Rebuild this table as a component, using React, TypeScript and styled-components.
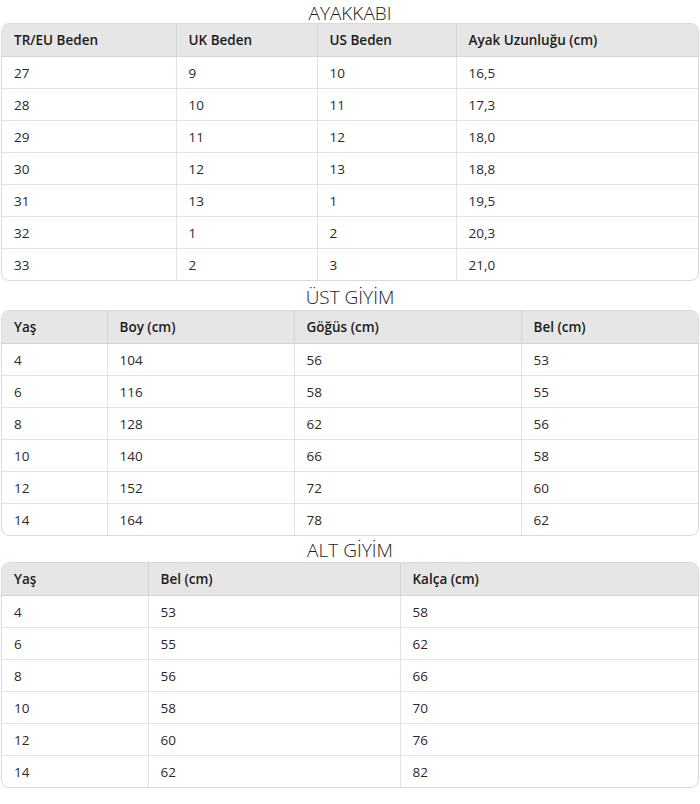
import React from "react";
import styled, { createGlobalStyle } from "styled-components";

const Global = createGlobalStyle`
  html, body { margin: 0; padding: 0; background: #fff; }
  body { font-family: "Open Sans", "Noto Sans", sans-serif; color: #1f1f1f; }
`;

const Page = styled.div`
  display: flex;
  flex-direction: column;
  width: 700px;
  padding: 0 1px;
  box-sizing: border-box;
`;

const Title = styled.div<{ $h: number; $pt: number }>`
  height: ${(p) => p.$h}px;
  padding-top: ${(p) => p.$pt}px;
  box-sizing: border-box;
  text-align: center;
  font-size: 19px;
  font-weight: 300;
  line-height: 20px;
  color: #1a1a1a;
`;

const Frame = styled.div`
  border: 1px solid #dadada;
  border-radius: 8px;
  overflow: hidden;
`;

const Table = styled.table`
  width: 100%;
  border-collapse: collapse;
  table-layout: fixed;
  font-size: 13.5px;
`;

const Th = styled.th<{ $last?: boolean }>`
  background: #e6e6e6;
  font-weight: 600;
  text-align: left;
  height: 32px;
  padding: 0 12px;
  border-right: ${(p) => (p.$last ? "none" : "1px solid #d4d4d4")};
  border-bottom: 1px solid #d4d4d4;
  color: #1c1c1c;
`;

const Td = styled.td<{ $last?: boolean; $lastRow?: boolean }>`
  height: 31px;
  padding: 0 12px;
  border-right: ${(p) => (p.$last ? "none" : "1px solid #e2e2e2")};
  border-bottom: ${(p) => (p.$lastRow ? "none" : "1px solid #e2e2e2")};
  color: #2a2a2a;
  font-weight: 400;
`;

type Spec = { title: string; h: number; pt: number; widths: number[]; head: string[]; rows: string[][] };

const specs: Spec[] = [
  {
    title: "AYAKKABI",
    h: 23,
    pt: 3,
    widths: [174, 141, 139, 244],
    head: ["TR/EU Beden", "UK Beden", "US Beden", "Ayak Uzunluğu (cm)"],
    rows: [
      ["27", "9", "10", "16,5"],
      ["28", "10", "11", "17,3"],
      ["29", "11", "12", "18,0"],
      ["30", "12", "13", "18,8"],
      ["31", "13", "1", "19,5"],
      ["32", "1", "2", "20,3"],
      ["33", "2", "3", "21,0"],
    ],
  },
  {
    title: "ÜST GİYİM",
    h: 29,
    pt: 6,
    widths: [105, 187, 227, 179],
    head: ["Yaş", "Boy (cm)", "Göğüs (cm)", "Bel (cm)"],
    rows: [
      ["4", "104", "56", "53"],
      ["6", "116", "58", "55"],
      ["8", "128", "62", "56"],
      ["10", "140", "66", "58"],
      ["12", "152", "72", "60"],
      ["14", "164", "78", "62"],
    ],
  },
  {
    title: "ALT GİYİM",
    h: 26,
    pt: 4,
    widths: [146, 252, 300],
    head: ["Yaş", "Bel (cm)", "Kalça (cm)"],
    rows: [
      ["4", "53", "58"],
      ["6", "55", "62"],
      ["8", "56", "66"],
      ["10", "58", "70"],
      ["12", "60", "76"],
      ["14", "62", "82"],
    ],
  },
];

export default function App() {
  return (
    <Page>
      <Global />
      {specs.map((s) => (
        <React.Fragment key={s.title}>
          <Title $h={s.h} $pt={s.pt}>{s.title}</Title>
          <Frame>
            <Table>
              <colgroup>
                {s.widths.map((w, i) => (
                  <col key={i} style={{ width: w }} />
                ))}
              </colgroup>
              <thead>
                <tr>
                  {s.head.map((h, i) => (
                    <Th key={h} $last={i === s.head.length - 1}>{h}</Th>
                  ))}
                </tr>
              </thead>
              <tbody>
                {s.rows.map((r, ri) => (
                  <tr key={ri}>
                    {r.map((c, ci) => (
                      <Td key={ci} $last={ci === r.length - 1} $lastRow={ri === s.rows.length - 1}>
                        {c}
                      </Td>
                    ))}
                  </tr>
                ))}
              </tbody>
            </Table>
          </Frame>
        </React.Fragment>
      ))}
    </Page>
  );
}
